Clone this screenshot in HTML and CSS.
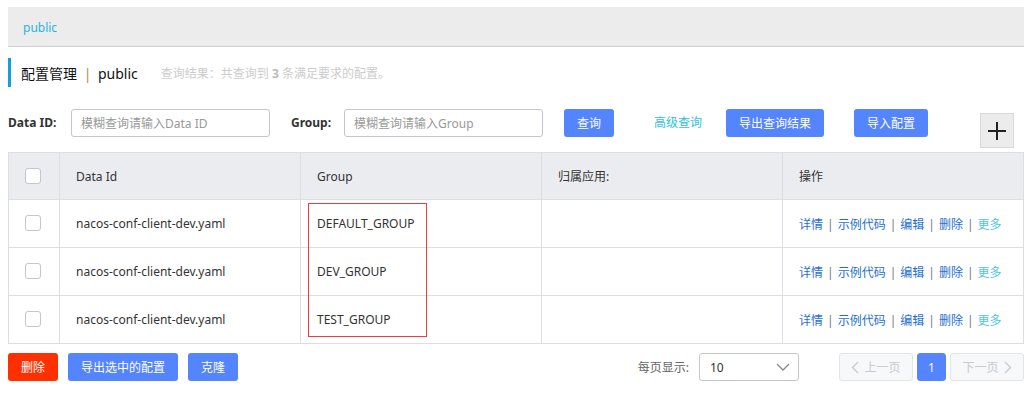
FILE: index.html
```html
<!DOCTYPE html>
<html lang="zh">
<head>
    <meta charset="UTF-8">
    <title>配置管理 - public</title>
    <link rel="stylesheet" href="styles.css">
</head>
<body>

<div class="page">
    <!-- 命名空间 -->
    <div class="ns-bar"><span class="ns-item">public</span></div>

    <!-- 标题 -->
    <div class="title-row">
        <span class="title">配置管理 <span class="title-sep">|</span> public</span>
        <span class="title-info">查询结果：共查询到 <b>3</b> 条满足要求的配置。</span>
    </div>

    <!-- 查询条件 -->
    <div class="search-row">
        <label class="search-label label-id">Data ID:</label>
        <input class="search-input" type="text" placeholder="模糊查询请输入Data ID">
        <label class="search-label label-group">Group:</label>
        <input class="search-input" type="text" placeholder="模糊查询请输入Group">
        <button class="btn btn-primary btn-query">查询</button>
        <a class="link-adv">高级查询</a>
        <button class="btn btn-primary btn-export">导出查询结果</button>
        <button class="btn btn-primary btn-import">导入配置</button>
        <button class="btn-add">
            <svg width="20" height="20" viewBox="0 0 20 20"><path d="M10 1v18M1 10h18" stroke="#222" stroke-width="2"/></svg>
        </button>
    </div>

    <!-- 配置列表 -->
    <div class="table-wrap">
        <table class="cfg-table">
            <thead>
                <tr>
                    <th class="col-check"><span class="checkbox"></span></th>
                    <th>Data Id</th>
                    <th>Group</th>
                    <th>归属应用:</th>
                    <th>操作</th>
                </tr>
            </thead>
            <tbody>
                <tr>
                    <td class="col-check"><span class="checkbox"></span></td>
                    <td>nacos-conf-client-dev.yaml</td>
                    <td>DEFAULT_GROUP</td>
                    <td></td>
                    <td class="ops"><a>详情</a><i>|</i><a>示例代码</a><i>|</i><a>编辑</a><i>|</i><a>删除</a><i>|</i><a class="more">更多</a></td>
                </tr>
                <tr>
                    <td class="col-check"><span class="checkbox"></span></td>
                    <td>nacos-conf-client-dev.yaml</td>
                    <td>DEV_GROUP</td>
                    <td></td>
                    <td class="ops"><a>详情</a><i>|</i><a>示例代码</a><i>|</i><a>编辑</a><i>|</i><a>删除</a><i>|</i><a class="more">更多</a></td>
                </tr>
                <tr>
                    <td class="col-check"><span class="checkbox"></span></td>
                    <td>nacos-conf-client-dev.yaml</td>
                    <td>TEST_GROUP</td>
                    <td></td>
                    <td class="ops"><a>详情</a><i>|</i><a>示例代码</a><i>|</i><a>编辑</a><i>|</i><a>删除</a><i>|</i><a class="more">更多</a></td>
                </tr>
            </tbody>
        </table>
        <!-- 标注框 -->
        <div class="mark-box"></div>
    </div>

    <!-- 底部操作 -->
    <div class="footer-row">
        <button class="btn btn-danger btn-del">删除</button>
        <button class="btn btn-primary btn-export-sel">导出选中的配置</button>
        <button class="btn btn-primary btn-clone">克隆</button>

        <span class="page-size-label">每页显示:</span>
        <div class="page-size">
            <span>10</span>
            <svg width="14" height="8" viewBox="0 0 14 8"><path d="M1 1l6 6 6-6" fill="none" stroke="#888" stroke-width="1.3"/></svg>
        </div>
        <div class="pager">
            <button class="pg-btn pg-prev">
                <svg width="8" height="13" viewBox="0 0 8 13"><path d="M7 1L1.5 6.5 7 12" fill="none" stroke="#c8cad0" stroke-width="1.4"/></svg>
                上一页
            </button>
            <button class="pg-btn pg-current">1</button>
            <button class="pg-btn pg-next">
                下一页
                <svg width="8" height="13" viewBox="0 0 8 13"><path d="M1 1l5.5 5.5L1 12" fill="none" stroke="#c8cad0" stroke-width="1.4"/></svg>
            </button>
        </div>
    </div>
</div>

</body>
</html>
```

FILE: styles.css
```css
body {
    margin: 0;
    padding: 7px 6px 0 8px;
    font-family: "Noto Sans", "Noto Sans CJK SC", sans-serif;
    font-size: 12px;
    color: #333;
    background: #fff;
}
.ns-bar {
    height: 40px;
    background-color: #ececec;
    border-bottom: 1px solid #cfcfcf;
    padding-left: 15px;
    display: flex;
    align-items: center;
    padding-top: 2px;
    box-sizing: border-box;
}
.ns-item {
    color: #28b4df;
    font-size: 12px;
}
.title-row {
    margin-top: 11px;
    height: 29px;
    border-left: 3px solid #10a0dd;
    display: flex;
    align-items: center;
    padding-left: 10px;
}
.title {
    font-size: 14px;
    color: #111;
}
.title-sep {
    color: #b88a3a;
    margin: 0 3px;
}
.title-info {
    margin-left: 23px;
    color: #ccc;
    font-size: 12px;
}
.title-info b {
    color: #bbb;
}
.search-row {
    margin-top: 22px;
    display: flex;
    align-items: flex-start;
    height: 39px;
}
.search-label {
    font-weight: bold;
    color: #333;
    line-height: 28px;
}
.label-id {
    width: 63px;
}
.label-group {
    width: 53px;
    margin-left: 21px;
}
.search-input {
    width: 199px;
    height: 28px;
    box-sizing: border-box;
    border: 1px solid #c4c6cf;
    border-radius: 3px;
    padding: 0 9px;
    font-family: inherit;
    font-size: 12px;
    outline: none;
}
.search-input::placeholder {
    color: #999;
}
.btn {
    height: 28px;
    border: none;
    border-radius: 3px;
    color: #fff;
    font-family: inherit;
    font-size: 12px;
    padding: 0;
    cursor: pointer;
}
.btn-primary {
    background-color: #5584ff;
}
.btn-danger {
    background-color: #ff3000;
}
.btn-query {
    width: 50px;
    margin-left: 21px;
}
.link-adv {
    margin-left: 40px;
    line-height: 28px;
    color: #33bfd9;
    cursor: pointer;
}
.btn-export {
    width: 98px;
    margin-left: 24px;
}
.btn-import {
    width: 74px;
    margin-left: 30px;
}
.btn-add {
    margin-left: auto;
    margin-right: 10px;
    margin-top: 4px;
    width: 34px;
    height: 35px;
    background: #ececec;
    border: 1px solid #d8d8d8;
    padding: 0;
    display: flex;
    align-items: center;
    justify-content: center;
}
.table-wrap {
    position: relative;
    margin-top: 4px;
}
.cfg-table {
    width: 100%;
    border-collapse: collapse;
    table-layout: fixed;
}
.cfg-table th,
.cfg-table td {
    border: 1px solid #dcdee3;
    text-align: left;
    padding: 0 16px;
    font-weight: normal;
    color: #333;
    white-space: nowrap;
}
.cfg-table th {
    background-color: #ebecf0;
    height: 46px;
}
.cfg-table td {
    height: 47px;
}
.cfg-table .col-check {
    width: 51px;
    box-sizing: border-box;
    padding: 0 0 0 16px;
}
.checkbox {
    display: inline-block;
    width: 14px;
    height: 14px;
    border: 1px solid #c4c6cf;
    border-radius: 3px;
    background: #fff;
    vertical-align: middle;
    margin-top: -3px;
}
.ops a {
    color: #1f6fd1;
    cursor: pointer;
}
.ops a.more {
    color: #4fc4e6;
}
.ops i {
    font-style: normal;
    color: #777;
    margin: 0 4px;
}
.mark-box {
    position: absolute;
    left: 300px;
    top: 51px;
    width: 117px;
    height: 132px;
    border: 1px solid #f03c3c;
}
.footer-row {
    margin-top: 9px;
    display: flex;
    align-items: center;
    height: 28px;
}
.btn-del {
    width: 50px;
}
.btn-export-sel {
    width: 110px;
    margin-left: 10px;
}
.btn-clone {
    width: 50px;
    margin-left: 10px;
}
.page-size-label {
    margin-left: auto;
    color: #666;
}
.page-size {
    margin-left: 10px;
    width: 100px;
    height: 28px;
    box-sizing: border-box;
    border: 1px solid #c4c6cf;
    border-radius: 3px;
    display: flex;
    align-items: center;
    justify-content: space-between;
    padding: 0 8px 0 10px;
    color: #333;
}
.pager {
    margin-left: 40px;
    display: flex;
    gap: 4px;
}
.pg-btn {
    height: 28px;
    border: 1px solid #e3e4e8;
    border-radius: 3px;
    background: #f7f8fa;
    color: #c8cad0;
    font-family: inherit;
    font-size: 12px;
    display: flex;
    align-items: center;
    justify-content: center;
    gap: 5px;
    padding: 0;
}
.pg-prev,
.pg-next {
    width: 74px;
}
.pg-current {
    width: 29px;
    background: #5584ff;
    border-color: #5584ff;
    color: #fff;
}
```
